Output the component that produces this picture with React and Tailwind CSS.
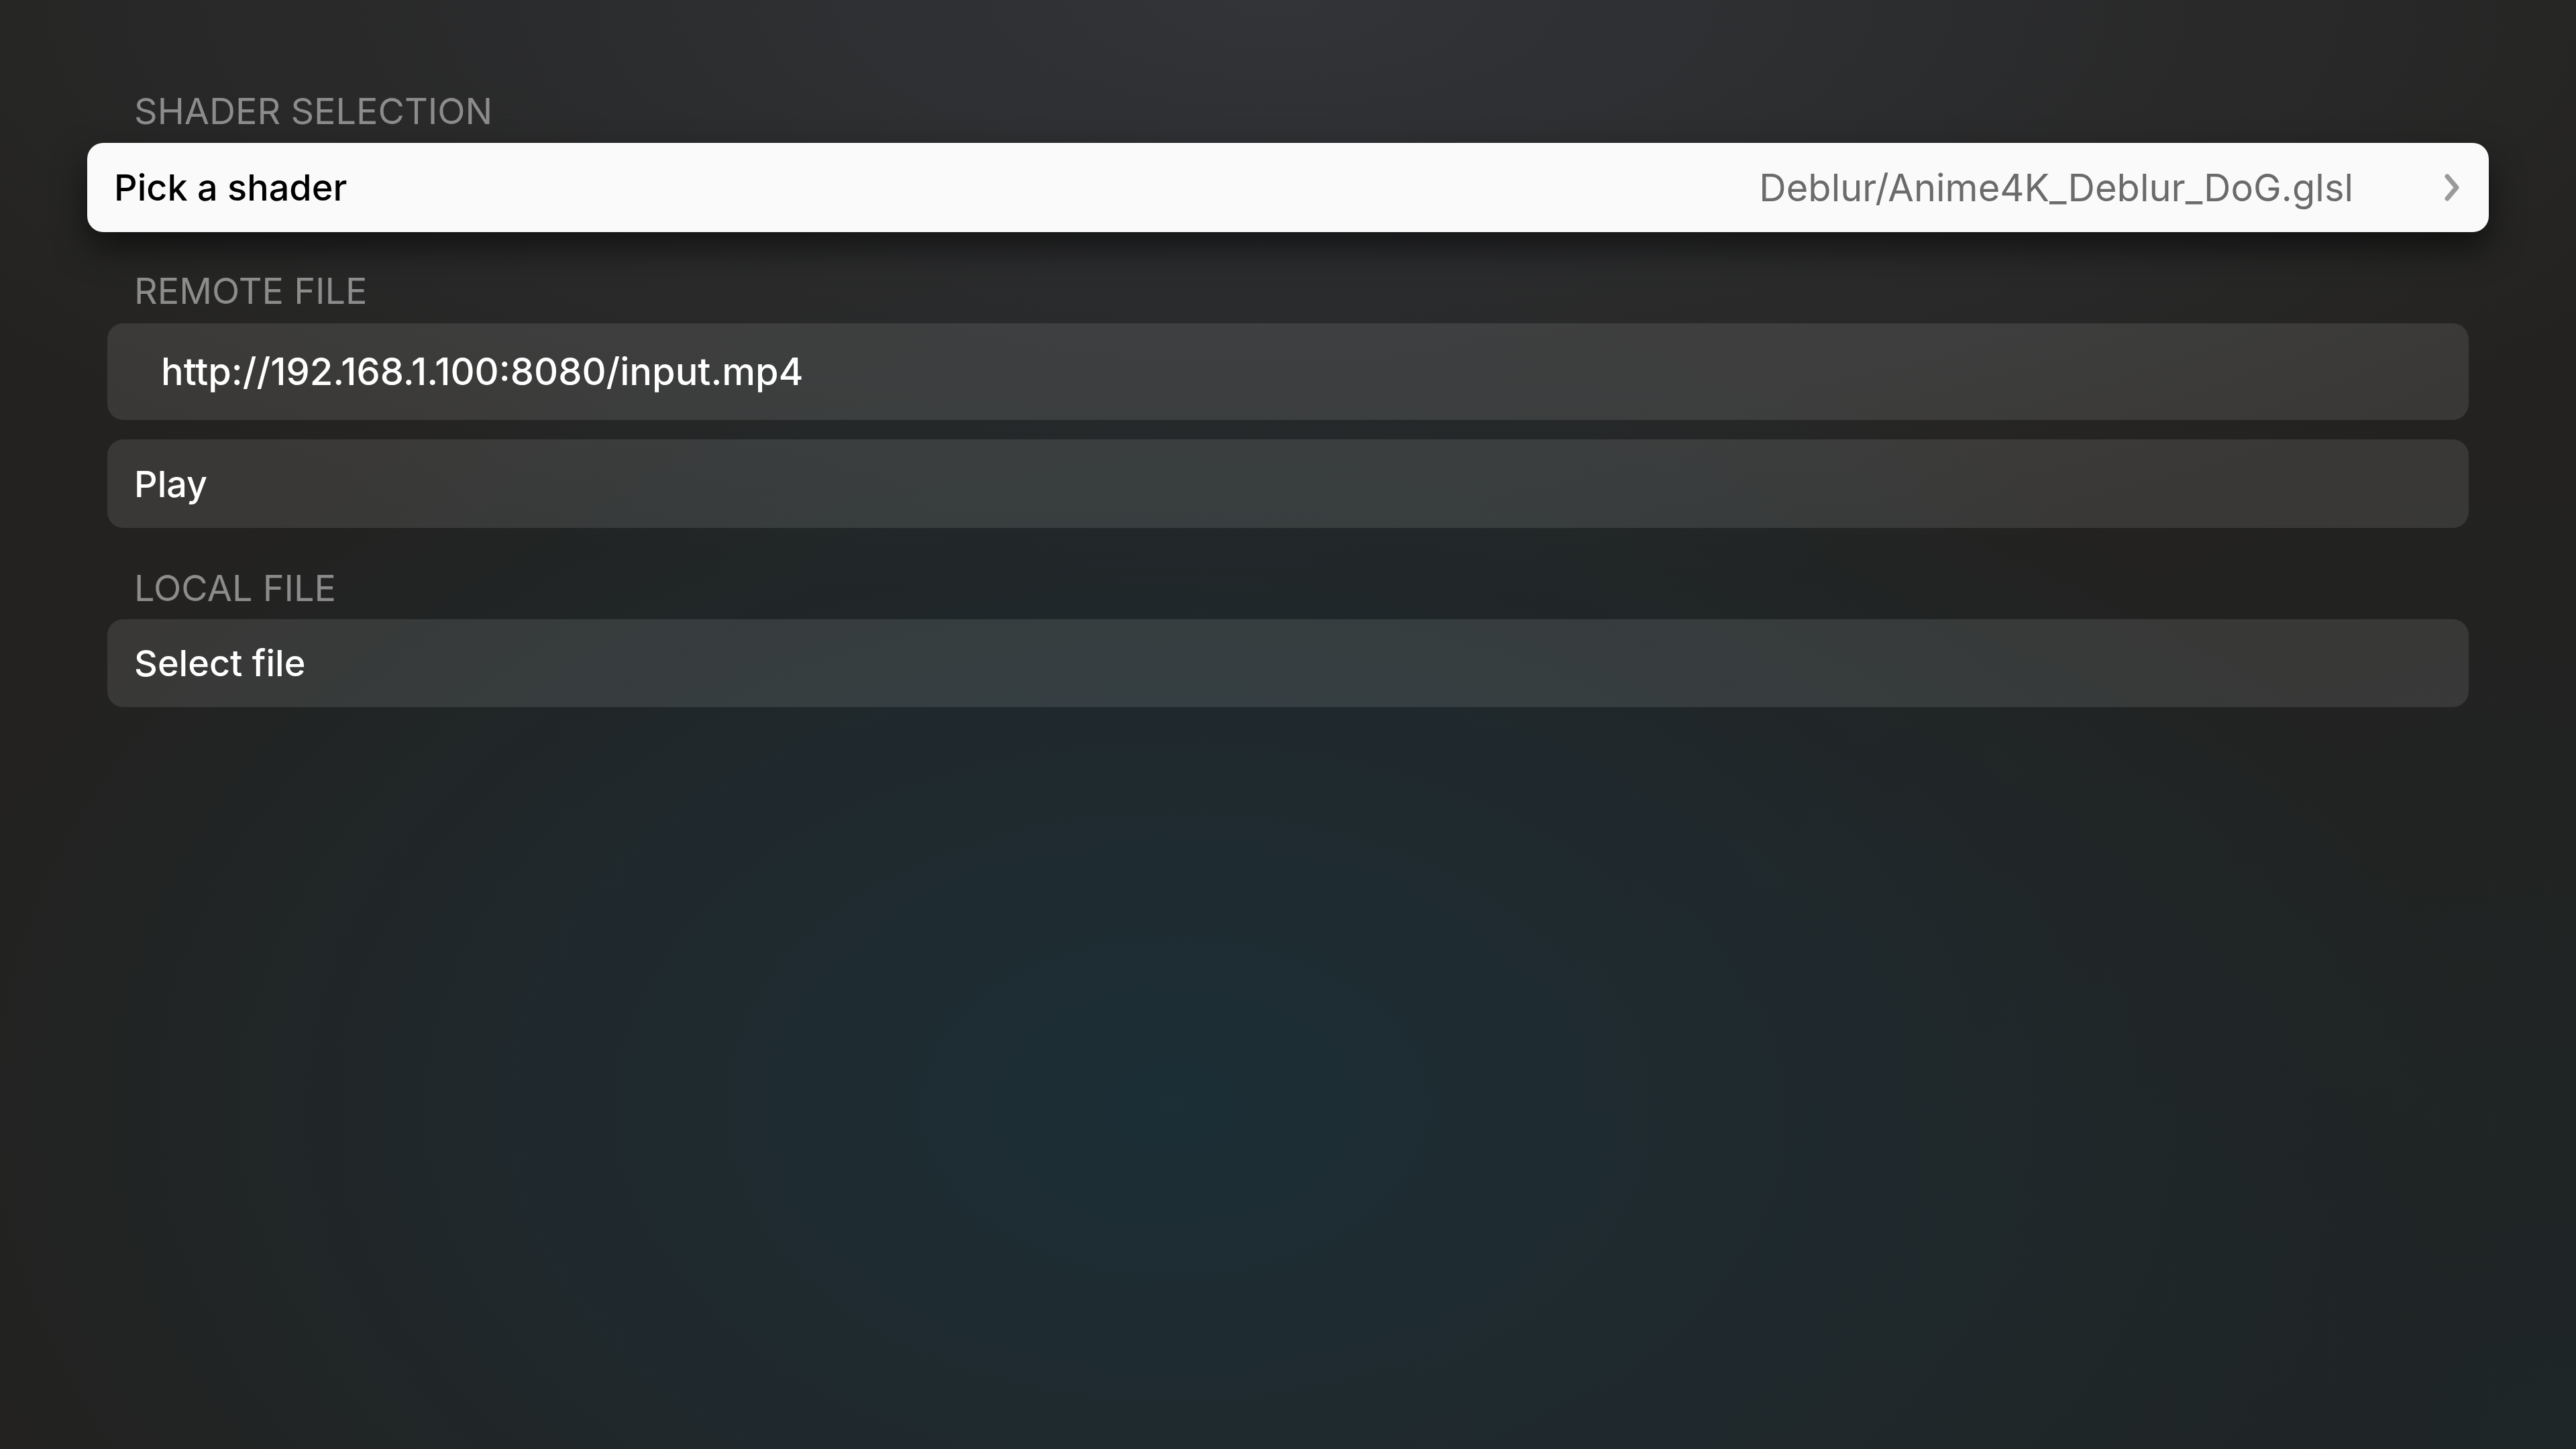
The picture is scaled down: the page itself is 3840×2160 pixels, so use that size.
import React from "react";

const Chevron = () => (
  <svg width="22" height="41" viewBox="0 0 22 41" fill="none">
    <polyline
      points="4,4 18,20.5 4,37"
      stroke="#9a9a9a"
      strokeWidth="7"
      strokeLinecap="round"
      strokeLinejoin="round"
    />
  </svg>
);

const SectionTitle = ({ children }) => (
  <div className="h-[64px] pl-[40px] flex items-center text-[54px] leading-none text-[#8c8c8c]">
    {children}
  </div>
);

const Row = ({ children, className = "" }) => (
  <div
    className={
      "flex items-center rounded-[24px] bg-white/10 text-white text-[54px] font-medium " +
      className
    }
  >
    {children}
  </div>
);

export default function App() {
  return (
    <div className="min-h-screen w-full bg-[#232220] bg-[radial-gradient(ellipse_1900px_1250px_at_1750px_1650px,rgba(28,46,54,1)_0%,rgba(28,46,54,0.55)_50%,rgba(28,46,54,0)_100%),radial-gradient(ellipse_2400px_900px_at_1900px_0px,rgba(50,52,56,1)_0%,rgba(50,52,56,0)_100%),radial-gradient(ellipse_1800px_1500px_at_3840px_2160px,rgba(30,38,39,1)_0%,rgba(30,38,39,0)_100%)] font-['Inter','Liberation_Sans',sans-serif]">
      <div className="flex flex-col px-[160px] pt-[134px]">
        <SectionTitle>SHADER SELECTION</SectionTitle>

        <div className="mt-[15px] -mx-[30px] h-[133px] flex items-center rounded-[24px] bg-[#fafafa] pl-[40px] pr-[44px] shadow-[0_24px_50px_rgba(0,0,0,0.55)]">
          <span className="text-[54px] font-medium text-black">Pick a shader</span>
          <span className="ml-auto text-[56px] text-[#6b6b6b]">
            Deblur/Anime4K_Deblur_DoG.glsl
          </span>
          <span className="ml-[136px] flex items-center">
            <Chevron />
          </span>
        </div>

        <div className="mt-[56px]">
          <SectionTitle>REMOTE FILE</SectionTitle>
        </div>
        <Row className="mt-[16px] h-[144px] pl-[80px]">
          <span className="text-[56px]">http://192.168.1.100:8080/input.mp4</span>
        </Row>
        <Row className="mt-[29px] h-[132px] pl-[40px]">Play</Row>

        <div className="mt-[58px]">
          <SectionTitle>LOCAL FILE</SectionTitle>
        </div>
        <Row className="mt-[14px] h-[131px] pl-[40px]">Select file</Row>
      </div>
    </div>
  );
}
